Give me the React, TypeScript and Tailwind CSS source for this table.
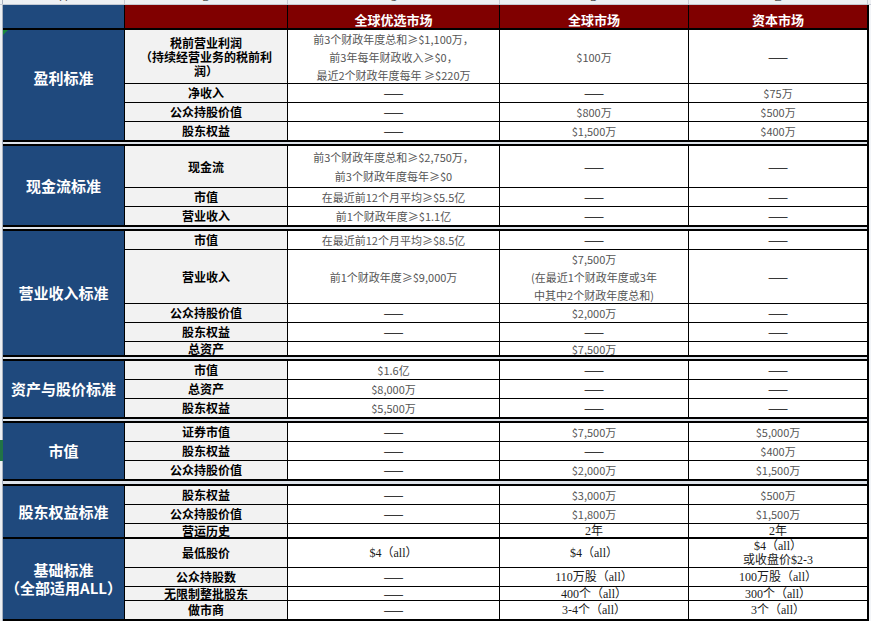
import React from "react";

const DASH = "——";
const COLS = "grid-cols-[121px_162px_211px_188px_178px]";

type Val = string | string[];
type Row = { label: Val; c: Val; d: Val; e: Val; serif?: boolean; lh?: string; elh?: string };
type Section = {
  title: string[];
  rowsClass: string;
  span: string;
  titlePad?: string;
  topBorder: boolean;
  gapAfter?: string;
  rows: Row[];
};

const sections: Section[] = [
  {
    title: ["盈利标准"],
    rowsClass: "grid-rows-[53px_18px_18px_18px]",
    span: "row-span-4",
    titlePad: "pb-[14px]",
    topBorder: false,
    gapAfter: "h-[2px]",
    rows: [
      {
        label: ["税前营业利润", "（持续经营业务的税前利", "润）"],
        c: ["前3个财政年度总和≥$1,100万，", "前3年每年财政收入≥$0，", "最近2个财政年度每年 ≥$220万"],
        d: "$100万",
        e: DASH,
      },
      { label: "净收入", c: DASH, d: DASH, e: "$75万" },
      { label: "公众持股价值", c: DASH, d: "$800万", e: "$500万" },
      { label: "股东权益", c: DASH, d: "$1,500万", e: "$400万" },
    ],
  },
  {
    title: ["现金流标准"],
    rowsClass: "grid-rows-[41px_18px_18px]",
    span: "row-span-3",
    topBorder: true,
    gapAfter: "h-[2px]",
    rows: [
      { label: "现金流", c: ["前3个财政年度总和≥$2,750万，", "前3个财政年度每年≥$0"], d: DASH, e: DASH, lh: "leading-[19px]" },
      { label: "市值", c: "在最近前12个月平均≥$5.5亿", d: DASH, e: DASH },
      { label: "营业收入", c: "前1个财政年度≥$1.1亿", d: DASH, e: DASH },
    ],
  },
  {
    title: ["营业收入标准"],
    rowsClass: "grid-rows-[18px_53px_18px_18px_13px]",
    span: "row-span-5",
    topBorder: true,
    gapAfter: "h-[2px]",
    rows: [
      { label: "市值", c: "在最近前12个月平均≥$8.5亿", d: DASH, e: DASH },
      {
        label: "营业收入",
        c: "前1个财政年度≥$9,000万",
        d: ["$7,500万", "(在最近1个财政年度或3年", "中其中2个财政年度总和)"],
        e: DASH,
      },
      { label: "公众持股价值", c: DASH, d: "$2,000万", e: DASH },
      { label: "股东权益", c: DASH, d: DASH, e: DASH },
      { label: "总资产", c: "", d: "$7,500万", e: "" },
    ],
  },
  {
    title: ["资产与股价标准"],
    rowsClass: "grid-rows-[18px_18px_18px]",
    span: "row-span-3",
    topBorder: true,
    gapAfter: "h-[2px]",
    rows: [
      { label: "市值", c: "$1.6亿", d: DASH, e: DASH },
      { label: "总资产", c: "$8,000万", d: DASH, e: DASH },
      { label: "股东权益", c: "$5,500万", d: DASH, e: DASH },
    ],
  },
  {
    title: ["市值"],
    rowsClass: "grid-rows-[18px_18px_18px]",
    span: "row-span-3",
    topBorder: true,
    gapAfter: "h-[3px]",
    rows: [
      { label: "证券市值", c: DASH, d: "$7,500万", e: "$5,000万" },
      { label: "股东权益", c: DASH, d: DASH, e: "$400万" },
      { label: "公众持股价值", c: DASH, d: "$2,000万", e: "$1,500万" },
    ],
  },
  {
    title: ["股东权益标准"],
    rowsClass: "grid-rows-[18px_18px_13px]",
    span: "row-span-3",
    topBorder: true,
    rows: [
      { label: "股东权益", c: DASH, d: "$3,000万", e: "$500万" },
      { label: "公众持股价值", c: DASH, d: "$1,800万", e: "$1,500万" },
      { label: "营运历史", c: "", d: "2年", e: "2年", serif: true },
    ],
  },
  {
    title: ["基础标准", "（全部适用ALL）"],
    rowsClass: "grid-rows-[28px_18px_13px_18px]",
    span: "row-span-4",
    topBorder: false,
    rows: [
      { label: "最低股价", c: "$4（all）", d: "$4（all）", e: ["$4（all）", "或收盘价$2-3"], serif: true, elh: "leading-[14px]" },
      { label: "公众持股数", c: DASH, d: "110万股（all）", e: "100万股（all）", serif: true },
      { label: "无限制整批股东", c: DASH, d: "400个（all）", e: "300个（all）", serif: true },
      { label: "做市商", c: DASH, d: "3-4个（all）", e: "3个（all）", serif: true },
    ],
  },
];

function ValueCell({ v, serif, lh }: { v: Val; serif?: boolean; lh?: string }) {
  const lines = Array.isArray(v) ? v : [v];
  const isDash = !Array.isArray(v) && v === DASH;
  let cls = "text-[11px] text-[#555555] font-['Noto_Sans_CJK_SC',sans-serif]";
  if (isDash) cls = "text-[12px] text-black font-['Noto_Sans_CJK_SC',sans-serif]";
  else if (serif) cls = "text-[12px] text-[#1a1a1a] font-['Liberation_Serif','Noto_Sans_CJK_SC',serif]";
  return (
    <div className="bg-white flex items-center justify-center overflow-hidden text-center">
      <div className={`${cls} ${lh ?? "leading-[18px]"} whitespace-nowrap`}>
        {lines.map((l, i) => (
          <div key={i}>{l}</div>
        ))}
      </div>
    </div>
  );
}

function LabelCell({ v }: { v: Val }) {
  const lines = Array.isArray(v) ? v : [v];
  return (
    <div className="bg-[#f2f2f2] flex items-center justify-center overflow-hidden text-center">
      <div className="text-[12px] leading-[14px] font-bold text-black whitespace-nowrap font-['Noto_Sans_CJK_SC',sans-serif]">
        {lines.map((l, i) => (
          <div key={i}>{l}</div>
        ))}
      </div>
    </div>
  );
}

function SectionBlock({ s, first }: { s: Section; first: boolean }) {
  return (
    <div
      className={`grid ${COLS} ${s.rowsClass} gap-px bg-black border-b-2 border-black ${
        s.topBorder ? "border-t-2" : ""
      }`}
    >
      <div
        className={`${s.span} relative bg-[#1f497d] flex flex-col items-center justify-center text-white font-bold text-[15px] leading-[18px] font-['Noto_Sans_CJK_SC',sans-serif] ${
          s.titlePad ?? ""
        }`}
      >
        {first && (
          <div className="absolute left-0 top-0 w-0 h-0 border-t-[5px] border-r-[5px] border-t-[#1b8a3a] border-r-transparent" />
        )}
        {s.title.map((t, i) => (
          <div key={i}>{t}</div>
        ))}
      </div>
      {s.rows.map((r, i) => (
        <React.Fragment key={i}>
          <LabelCell v={r.label} />
          <ValueCell v={r.c} serif={r.serif} lh={r.lh} />
          <ValueCell v={r.d} serif={r.serif} />
          <ValueCell v={r.e} serif={r.serif} lh={r.elh} />
        </React.Fragment>
      ))}
    </div>
  );
}

export default function App() {
  const letters = ["A", "B", "C", "D", "E"];
  return (
    <div className="w-[871px] h-[621px] overflow-hidden bg-white font-['Noto_Sans_CJK_SC',sans-serif]">
      {/* spreadsheet column letters strip */}
      <div className="flex h-[5px] border-b border-[#c5cad3] bg-[#eef0f3] overflow-hidden">
        <div className="w-[3px] border-r border-[#aab2c0]" />
        <div className={`grid ${COLS} gap-px bg-[#c5cad3]`}>
          {letters.map((l) => (
            <div key={l} className="bg-[#eef0f3] flex justify-center overflow-hidden">
              <span className="text-[11px] leading-[11px] -mt-[8px] text-[#555] font-['Liberation_Sans',sans-serif]">
                {l}
              </span>
            </div>
          ))}
        </div>
        <div className="flex-1 border-l border-[#c5cad3]" />
      </div>

      <div className="flex">
        <div className="w-[3px] relative bg-[#eef0f3] border-r border-[#aab2c0]">
          <div className="absolute left-0 top-[435px] w-[3px] h-[21px] bg-[#217346]" />
        </div>
        <div className="w-[866px] border-r-2 border-black flex flex-col">
          {/* header */}
          <div className={`grid ${COLS} h-[25px] gap-px bg-black border-b-2 border-black`}>
            <div className="bg-[#1f497d]" />
            <div className="bg-[#800000]" />
            {["全球优选市场", "全球市场", "资本市场"].map((h) => (
              <div
                key={h}
                className="bg-[#800000] flex items-center justify-center pt-[5px] text-white font-bold text-[13px] leading-[13px]"
              >
                {h}
              </div>
            ))}
          </div>
          {sections.map((s, i) => (
            <React.Fragment key={i}>
              <SectionBlock s={s} first={i === 0} />
              {s.gapAfter && <div className={`${s.gapAfter} bg-[#dde2e9]`} />}
            </React.Fragment>
          ))}
        </div>
        <div className="w-[2px] bg-[#f3f5f8]" />
      </div>
    </div>
  );
}
